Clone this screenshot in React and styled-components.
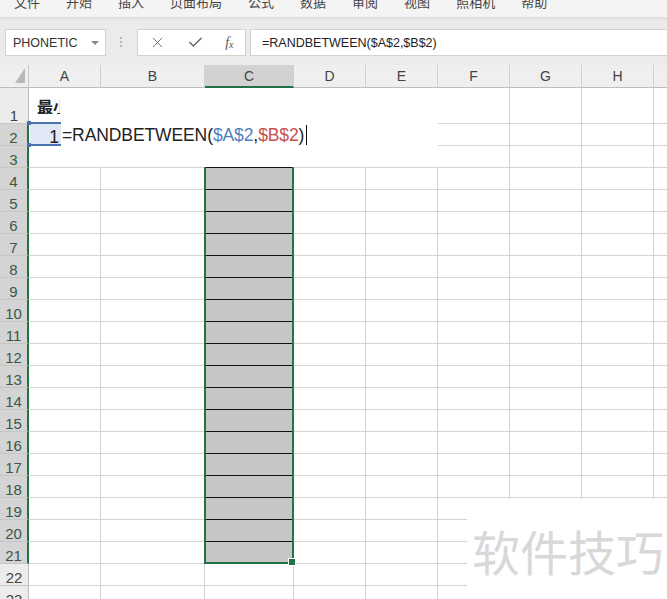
import styled, { createGlobalStyle } from "styled-components";
import { X, Check } from "lucide-react";

const GlobalStyle = createGlobalStyle`
  html, body {
    margin: 0;
    padding: 0;
    background: #ffffff;
    overflow: hidden;
  }
  body {
    font-family: "Liberation Sans", "Noto Sans CJK SC", sans-serif;
  }
`;

const COLUMNS = [
  { name: "A", width: 72 },
  { name: "B", width: 104 },
  { name: "C", width: 89 },
  { name: "D", width: 72 },
  { name: "E", width: 72 },
  { name: "F", width: 72 },
  { name: "G", width: 72 },
  { name: "H", width: 72 },
  { name: "I", width: 72 },
];

const TABS = ["文件", "开始", "插入", "页面布局", "公式", "数据", "审阅", "视图", "照相机", "帮助"];

const ROW_COUNT = 23;

const Page = styled.div`
  position: relative;
  width: 667px;
  height: 599px;
  overflow: hidden;
  background: #fff;
`;

const Ribbon = styled.div`
  height: 17px;
  background: #f4f4f4;
  display: flex;
  align-items: flex-start;
  gap: 26px;
  padding-left: 14px;
  overflow: hidden;
`;

const Tab = styled.span`
  font-family: "Noto Sans CJK SC", sans-serif;
  font-size: 13px;
  line-height: 13px;
  margin-top: -5px;
  color: #444;
  white-space: nowrap;
`;

const FormulaBar = styled.div`
  height: 48px;
  box-sizing: border-box;
  background: linear-gradient(#dcdcdc 0, #ebebeb 4px, #ebebeb 100%);
  display: flex;
  align-items: flex-start;
  padding: 12px 0 0 5px;
`;

const Box = styled.div`
  box-sizing: border-box;
  height: 27px;
  background: #fff;
  border: 1px solid #d2d2d2;
  display: flex;
  align-items: center;
`;

const NameBox = styled(Box)`
  width: 101px;
  padding: 0 6px 0 7px;
  justify-content: space-between;
  font-size: 12.5px;
  color: #333;
`;

const DropArrow = styled.span`
  width: 0;
  height: 0;
  border-left: 4px solid transparent;
  border-right: 4px solid transparent;
  border-top: 4px solid #8a8a8a;
`;

const Grip = styled.div`
  margin: 8px 0 0 14px;
  display: flex;
  flex-direction: column;
  gap: 2px;
`;

const GripDot = styled.span`
  width: 2px;
  height: 2px;
  background: #b8b8b8;
`;

const FxBox = styled(Box)`
  width: 109px;
  margin-left: 15px;
  justify-content: space-around;
  padding: 0 1px;
  color: #666;
`;

const FxLabel = styled.span`
  font-family: "Liberation Serif", serif;
  font-style: italic;
  font-size: 14px;
  color: #555;
  sub {
    font-size: 10px;
    vertical-align: -1px;
  }
`;

const FormulaInput = styled(Box)`
  flex: 1;
  margin-left: 4px;
  padding-left: 11px;
  border-right: none;
  font-size: 12.5px;
  color: #222;
  white-space: nowrap;
`;

const Sheet = styled.div`
  display: grid;
  grid-template-columns: 29px ${COLUMNS.map((c) => `${c.width}px`).join(" ")};
  grid-template-rows: 23px 36px repeat(${ROW_COUNT - 1}, 22px);
`;

const Corner = styled.div`
  box-sizing: border-box;
  background: #efefef;
  border-right: 1px solid #c8c8c8;
  border-bottom: 1px solid #bdbdbd;
`;

const ColHeader = styled.div`
  box-sizing: border-box;
  display: flex;
  align-items: center;
  justify-content: center;
  font-size: 14px;
  color: #444;
  background: ${(p) => (p.$active ? "#d2d2d2" : "#efefef")};
  border-right: 1px solid #cfcfcf;
  border-bottom: ${(p) => (p.$active ? "2px solid #217346" : "1px solid #bdbdbd")};
`;

const RowHeader = styled.div`
  box-sizing: border-box;
  display: flex;
  align-items: flex-end;
  justify-content: center;
  font-size: 15px;
  line-height: 14px;
  color: ${(p) => (p.$active ? "#3b5747" : "#444")};
  background: ${(p) => (p.$active ? "#d4d4d4" : "#ececec")};
  border-bottom: 1px solid #c6c6c6;
  border-right: ${(p) => (p.$active ? "2px solid #217346" : "1px solid #bdbdbd")};
`;

const Cell = styled.div`
  box-sizing: border-box;
  min-width: 0;
  background: ${(p) => (p.$selected ? "#c6c6c6" : "#fff")};
  border-right: 1px solid
    ${(p) => (p.$plain || p.$noRight ? "transparent" : "#d4d4d4")};
  border-bottom: 1px solid
    ${(p) => (p.$plain ? "transparent" : p.$dark ? "#111" : "#d4d4d4")};
`;

const TitleCell = styled(Cell)`
  padding: 10px 0 0 8px;
`;

const TitleClip = styled.div`
  width: 23px;
  overflow: hidden;
  white-space: nowrap;
  font-family: "Noto Sans CJK SC", sans-serif;
  font-weight: 700;
  font-size: 16px;
  line-height: 16px;
  color: #222;
`;

const EditCell = styled(Cell)`
  position: relative;
  z-index: 1;
  display: flex;
  align-items: flex-start;
  padding-left: 1px;
  white-space: nowrap;
  font-size: 17.5px;
  letter-spacing: -0.1px;
  color: #222;
`;

const RefBox = styled.div`
  position: relative;
  box-sizing: border-box;
  flex: none;
  width: 31px;
  height: 24px;
  margin-top: -2px;
  padding: 2px 2px 0 0;
  line-height: 22px;
  text-align: right;
  background: #dfe8f4;
  border-top: 2px solid #4a73b0;
  border-bottom: 2px solid #4a73b0;

  &::before,
  &::after {
    content: "";
    position: absolute;
    left: -3px;
    width: 4px;
    height: 4px;
    background: #4a73b0;
  }
  &::before {
    top: -3px;
  }
  &::after {
    bottom: -3px;
  }
`;

const EditText = styled.span`
  line-height: 22px;
  padding-left: 1px;
`;

const Ref = styled.span`
  color: ${(p) => p.$color};
`;

const Caret = styled.span`
  display: inline-block;
  flex: none;
  width: 1px;
  height: 20px;
  margin: 1px 0 0 2px;
  background: #111;
`;

const Selection = styled.div`
  position: absolute;
  left: 204px;
  top: 167px;
  width: 90px;
  height: 397px;
  box-sizing: border-box;
  border: 2px solid #217346;
  border-top: none;
  pointer-events: none;
`;

const FillHandle = styled.span`
  position: absolute;
  right: -4px;
  bottom: -4px;
  width: 6px;
  height: 6px;
  background: #217346;
  border: 1px solid #fff;
`;

const Watermark = styled.div`
  position: absolute;
  left: 467px;
  top: 499px;
  right: 0;
  bottom: 0;
  background: #fff;
  padding: 27px 0 0 5px;
  font-family: "Noto Sans CJK SC", sans-serif;
  font-size: 48px;
  line-height: 48px;
  color: #d8d8d8;
  white-space: nowrap;
`;

const renderCell = (row, colIndex) => {
  const key = `${row}-${colIndex}`;
  const inEdit = colIndex <= 4;
  const plain = inEdit && row <= 2;
  const noRight = inEdit && row === 3;
  const selected = colIndex === 2 && row >= 4 && row <= 21;
  const dark = selected || (colIndex === 2 && row === 3);

  if (row === 1 && colIndex === 0) {
    return (
      <TitleCell key={key} $plain>
        <TitleClip>最小</TitleClip>
      </TitleCell>
    );
  }

  if (row === 2 && colIndex === 0) {
    return (
      <EditCell key={key} $plain>
        <RefBox>1</RefBox>
        <EditText>
          =RANDBETWEEN(<Ref $color="#4f7fc0">$A$2</Ref>,<Ref $color="#c5504c">$B$2</Ref>)
        </EditText>
        <Caret />
      </EditCell>
    );
  }

  return (
    <Cell
      key={key}
      $plain={plain}
      $noRight={noRight}
      $selected={selected}
      $dark={dark}
    />
  );
};

export default function App() {
  const rows = Array.from({ length: ROW_COUNT }, (_, i) => i + 1);

  return (
    <Page>
      <GlobalStyle />
      <Ribbon>
        {TABS.map((t) => (
          <Tab key={t}>{t}</Tab>
        ))}
      </Ribbon>

      <FormulaBar>
        <NameBox>
          PHONETIC
          <DropArrow />
        </NameBox>
        <Grip>
          <GripDot />
          <GripDot />
          <GripDot />
        </Grip>
        <FxBox>
          <X size={17} strokeWidth={1.3} />
          <Check size={17} strokeWidth={2} />
          <FxLabel>
            f<sub>x</sub>
          </FxLabel>
        </FxBox>
        <FormulaInput>=RANDBETWEEN($A$2,$B$2)</FormulaInput>
      </FormulaBar>

      <Sheet>
        <Corner>
          <svg width="28" height="22" viewBox="0 0 28 22">
            <polygon points="25,3 25,18 15,18" fill="#b8b8b8" />
          </svg>
        </Corner>
        {COLUMNS.map((c) => (
          <ColHeader key={c.name} $active={c.name === "C"}>
            {c.name}
          </ColHeader>
        ))}

        {rows.map((row) => [
          <RowHeader key={`h${row}`} $active={row >= 2 && row <= 21}>
            {row}
          </RowHeader>,
          ...COLUMNS.map((_, ci) => renderCell(row, ci)),
        ])}
      </Sheet>

      <Selection>
        <FillHandle />
      </Selection>

      <Watermark>软件技巧</Watermark>
    </Page>
  );
}
